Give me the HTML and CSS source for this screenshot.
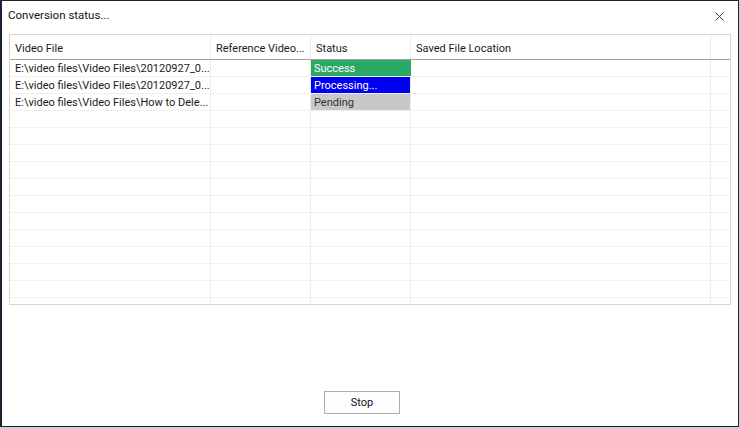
FILE: index.html
```html
<!DOCTYPE html>
<html>
<head>
<meta charset="utf-8">
<link rel="stylesheet" href="styles.css">
</head>
<body>
<div class="window">
  <div class="titlebar">
    <span class="title">Conversion status...</span>
    <svg class="close" width="9" height="9" viewBox="0 0 9 9"><path d="M0.5 0.5 L8.5 8.5 M8.5 0.5 L0.5 8.5" stroke="#444" stroke-width="1" fill="none"/></svg>
  </div>
  <div class="content">
    <div class="grid">
      <div class="row head">
        <div class="cell">Video File</div>
        <div class="cell">Reference Video...</div>
        <div class="cell">Status</div>
        <div class="cell">Saved File Location</div>
        <div class="cell"></div>
      </div>
      <div class="row">
        <div class="cell">E:\video files\Video Files\20120927_0...</div>
        <div class="cell"></div>
        <div class="cell st success">Success</div>
        <div class="cell"></div>
        <div class="cell"></div>
      </div>
      <div class="row">
        <div class="cell">E:\video files\Video Files\20120927_0...</div>
        <div class="cell"></div>
        <div class="cell st processing">Processing...</div>
        <div class="cell"></div>
        <div class="cell"></div>
      </div>
      <div class="row">
        <div class="cell">E:\video files\Video Files\How to Dele...</div>
        <div class="cell"></div>
        <div class="cell st pending">Pending</div>
        <div class="cell"></div>
        <div class="cell"></div>
      </div>
      <div class="row"><div class="cell"></div><div class="cell"></div><div class="cell"></div><div class="cell"></div><div class="cell"></div></div>
      <div class="row"><div class="cell"></div><div class="cell"></div><div class="cell"></div><div class="cell"></div><div class="cell"></div></div>
      <div class="row"><div class="cell"></div><div class="cell"></div><div class="cell"></div><div class="cell"></div><div class="cell"></div></div>
      <div class="row"><div class="cell"></div><div class="cell"></div><div class="cell"></div><div class="cell"></div><div class="cell"></div></div>
      <div class="row"><div class="cell"></div><div class="cell"></div><div class="cell"></div><div class="cell"></div><div class="cell"></div></div>
      <div class="row"><div class="cell"></div><div class="cell"></div><div class="cell"></div><div class="cell"></div><div class="cell"></div></div>
      <div class="row"><div class="cell"></div><div class="cell"></div><div class="cell"></div><div class="cell"></div><div class="cell"></div></div>
      <div class="row"><div class="cell"></div><div class="cell"></div><div class="cell"></div><div class="cell"></div><div class="cell"></div></div>
      <div class="row"><div class="cell"></div><div class="cell"></div><div class="cell"></div><div class="cell"></div><div class="cell"></div></div>
      <div class="row"><div class="cell"></div><div class="cell"></div><div class="cell"></div><div class="cell"></div><div class="cell"></div></div>
      <div class="row"><div class="cell"></div><div class="cell"></div><div class="cell"></div><div class="cell"></div><div class="cell"></div></div>
      <div class="row filler"><div class="cell"></div><div class="cell"></div><div class="cell"></div><div class="cell"></div><div class="cell"></div></div>
    </div>
    <div class="footer">
      <button class="btn">Stop</button>
    </div>
  </div>
</div>
</body>
</html>
```
FILE: styles.css
```css
html, body {
  margin: 0;
  padding: 0;
  background: #c9d1dc;
  width: 740px;
  height: 429px;
  overflow: hidden;
}
.window {
  box-sizing: border-box;
  width: 739px;
  height: 427px;
  background: #fff;
  border: 1px solid #1b2232;
  border-left-width: 2px;
  display: flex;
  flex-direction: column;
  font-family: Roboto, "Noto Sans", sans-serif;
  font-size: 11px;
  color: #000;
}
.titlebar {
  height: 29px;
  display: flex;
  align-items: center;
  justify-content: space-between;
  padding: 0 14px 2px 6px;
  box-sizing: border-box;
}
.title {
  font-size: 11.5px;
  color: #111;
}
.close {
  display: block;
  margin-top: 3px;
}
.content {
  flex: 1;
  display: flex;
  flex-direction: column;
  padding: 4px 6px 0 7px;
}
.grid {
  width: 722px;
  box-sizing: border-box;
  border: 1px solid #d6d6d6;
  display: flex;
  flex-direction: column;
}
.row {
  display: grid;
  grid-template-columns: 201px 100px 100px 300px 19px;
  height: 17px;
  border-bottom: 1px solid #f0f0f0;
  box-sizing: border-box;
}
.row.head {
  height: 25px;
  border-bottom: 1px solid #a0a0a0;
}
.row.filler {
  height: 6px;
  border-bottom: none;
}
.cell {
  border-right: 1px solid #ececec;
  padding-left: 5px;
  padding-top: 2px;
  line-height: 14px;
  white-space: nowrap;
  overflow: hidden;
  color: #1a1a1a;
}
.cell:last-child {
  border-right: none;
}
.head .cell {
  line-height: 21px;
  padding-top: 3px;
  padding-left: 5px;
  color: #1a1a1a;
}
.st {
  padding-left: 3px;
}
.success {
  background: #2ba865;
  color: #fff;
  border-right-color: #2ba865;
}
.processing {
  background: #0000f0;
  color: #fff;
}
.pending {
  background: #c8c8c8;
  color: #333;
}
.footer {
  flex: 1;
  display: flex;
  align-items: flex-end;
  padding: 0 0 12px 315px;
}
.btn {
  width: 76px;
  height: 23px;
  box-sizing: border-box;
  border: 1px solid #adadad;
  background: #fdfdfd;
  font-family: Roboto, "Noto Sans", sans-serif;
  font-size: 11px;
  color: #111;
  padding: 0;
}
```
